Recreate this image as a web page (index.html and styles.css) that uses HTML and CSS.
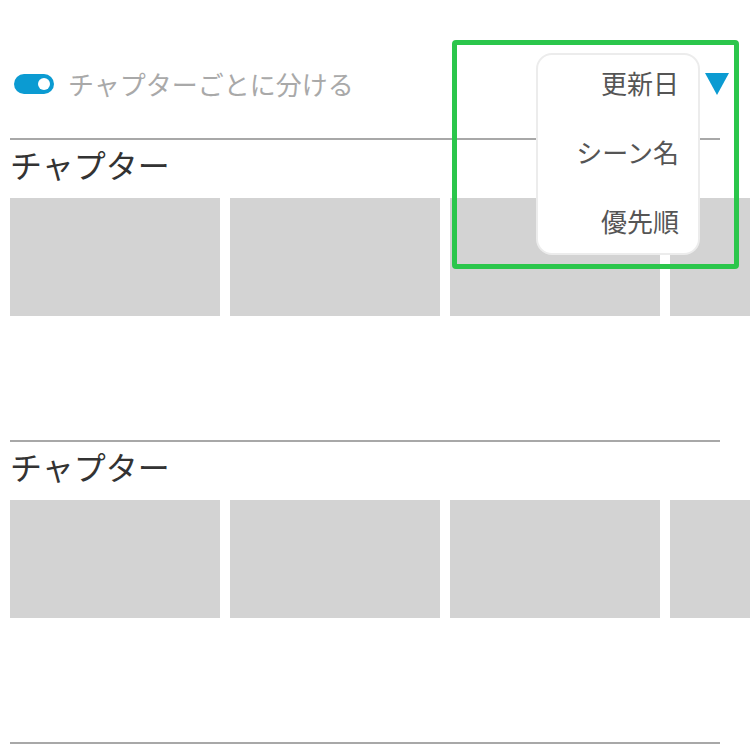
FILE: index.html
```html
<!DOCTYPE html>
<html lang="ja">
<head>
  <meta charset="UTF-8">
  <meta name="viewport" content="width=device-width, initial-scale=1.0">
  <title>チャプター</title>
  <link rel="stylesheet" href="styles.css">
</head>
<body>
  <!-- Top bar: toggle + sort -->
  <div class="toolbar">
    <span class="toggle"><span class="knob"></span></span>
    <span class="toggle-label">チャプターごとに分ける</span>
  </div>

  <!-- Chapters -->
  <div class="chapter">
    <div class="rule"></div>
    <h2 class="chapter-title">チャプター</h2>
    <div class="thumbs">
      <div class="thumb"></div>
      <div class="thumb"></div>
      <div class="thumb"></div>
      <div class="thumb"></div>
    </div>
  </div>
  <div class="chapter">
    <div class="rule"></div>
    <h2 class="chapter-title">チャプター</h2>
    <div class="thumbs">
      <div class="thumb"></div>
      <div class="thumb"></div>
      <div class="thumb"></div>
      <div class="thumb"></div>
    </div>
  </div>
  <div class="chapter">
    <div class="rule"></div>
  </div>

  <!-- Sort dropdown (open) -->
  <svg class="sort-arrow" width="24" height="22" viewBox="0 0 24 22">
    <polygon points="0,0 24,0 12,22" fill="#0b9bd2"/>
  </svg>
  <div class="sort-menu">
    <div class="sort-item">更新日</div>
    <div class="sort-item">シーン名</div>
    <div class="sort-item">優先順</div>
  </div>
  <div class="highlight"></div>
</body>
</html>
```

FILE: styles.css
```css
/* Base */
body {
  margin: 0;
  font-family: "Noto Sans CJK JP", "Noto Sans", sans-serif;
  background: #fff;
  overflow: hidden;
}
/* Toolbar */
.toolbar {
  height: 108px;
  padding: 30px 0 0 14px;
  display: flex;
  align-items: center;
  gap: 14px;
}
.toggle {
  width: 40px;
  height: 20px;
  border-radius: 10px;
  background: #0b9bd2;
  display: flex;
  align-items: center;
  justify-content: flex-end;
  padding-right: 4px;
  box-sizing: border-box;
}
.knob {
  width: 12px;
  height: 12px;
  border-radius: 50%;
  background: #fff;
}
.toggle-label {
  font-size: 26px;
  color: #a9a9a9;
  line-height: 30px;
}
/* Chapter sections */
.chapter {
  padding-left: 10px;
}
.rule {
  width: 710px;
  height: 2px;
  background: #a8a8a8;
}
.chapter-title {
  margin: 0;
  padding-top: 4px;
  font-size: 32px;
  font-weight: normal;
  line-height: 40px;
  color: #333;
}
.thumbs {
  display: flex;
  gap: 10px;
  margin-top: 14px;
  margin-bottom: 124px;
  overflow: hidden;
}
.thumb {
  flex-shrink: 0;
  width: 210px;
  height: 118px;
  background: #d3d3d3;
}
/* Sort dropdown */
.sort-arrow {
  position: absolute;
  left: 705px;
  top: 73px;
}
.sort-menu {
  position: absolute;
  left: 536px;
  top: 53px;
  width: 164px;
  height: 202px;
  box-sizing: border-box;
  background: #fff;
  border: 2px solid #ececec;
  border-radius: 16px;
  display: flex;
  flex-direction: column;
  gap: 5px;
}
.sort-item {
  height: 64px;
  line-height: 64px;
  margin-top: -4px;
  margin-bottom: 4px;
  text-align: right;
  padding-right: 19px;
  font-size: 26px;
  color: #555;
}
.highlight {
  position: absolute;
  left: 452px;
  top: 40px;
  width: 287px;
  height: 229px;
  box-sizing: border-box;
  border: 5px solid #2bc64b;
  border-radius: 4px;
}
```
